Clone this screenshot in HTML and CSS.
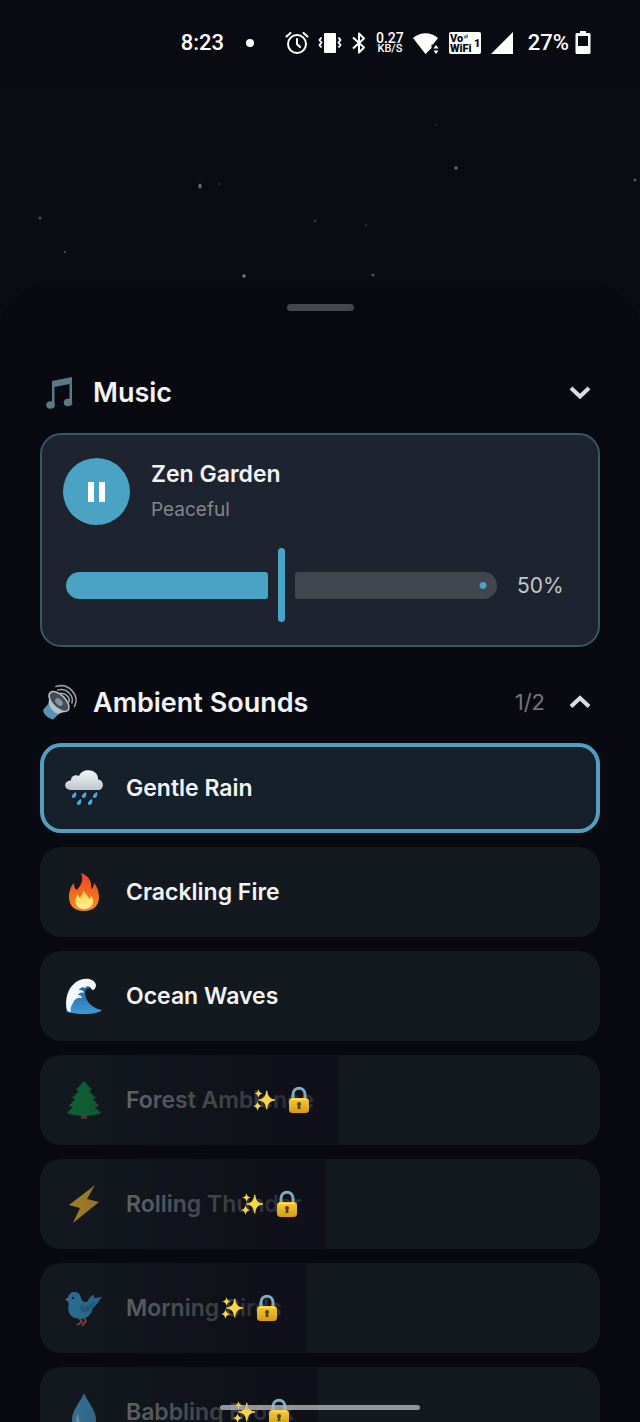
FILE: index.html
```html
<!DOCTYPE html>
<html lang="en">
<head>
<meta charset="utf-8">
<meta name="viewport" content="width=device-width, initial-scale=1">
<title>Sounds</title>
<link rel="stylesheet" href="styles.css">
</head>
<body>

<!-- shared icons -->
<svg class="defs" aria-hidden="true">
	<defs>
		<linearGradient id="cloud" x1="0" y1="0" x2="0" y2="1"><stop offset="0" stop-color="#f4f6f7"/><stop offset="1" stop-color="#bcc8ce"/></linearGradient>
		<linearGradient id="flame" x1="0" y1="0" x2="0" y2="1"><stop offset="0" stop-color="#e8432a"/><stop offset="1" stop-color="#fb8c1a"/></linearGradient>
		<linearGradient id="core" x1="0" y1="0" x2="0" y2="1"><stop offset="0" stop-color="#ffc928"/><stop offset="1" stop-color="#fff3a0"/></linearGradient>
		<linearGradient id="sea" x1="0" y1="0" x2="0" y2="1"><stop offset="0" stop-color="#1d5c88"/><stop offset="1" stop-color="#3d9ad6"/></linearGradient>
		<linearGradient id="gold" x1="0" y1="0" x2="0" y2="1"><stop offset="0" stop-color="#f5cd3a"/><stop offset="1" stop-color="#d89a12"/></linearGradient>
	</defs>
	<symbol id="i-sparkles" viewBox="0 0 24 24">
		<g fill="#f7d64a">
			<path d="M15 2c1 6.500 3 9 9 10-6 1-8 3.500-9 10-1-6.500-3-9-9-10 6-1 8-3.500 9-10z" stroke="#f7d64a" stroke-width="1"/>
			<path d="M6 0c.6 3.200 1.500 4.300 5 5-3.500.7-4.400 1.800-5 5-.6-3.200-1.500-4.300-5-5 3.500-.7 4.400-1.800 5-5z"/>
			<path d="M5 13c.7 3.600 2 5 5.500 5.500C7 19 5.700 20.400 5 24c-.7-3.600-2-5-5-5.500 3-.5 4.300-1.900 5-5.500z"/>
		</g>
	</symbol>
	<symbol id="i-lock" viewBox="0 0 24 28">
		<path d="M6 14V8.500c0-8.500 12-8.500 12 0V14" fill="none" stroke="#7eadc4" stroke-width="3"/>
		<rect x="2" y="12" width="20" height="15" rx="3.500" fill="url(#gold)"/>
		<path d="M4 13.500h16" stroke="#fbe27a" stroke-width="1"/>
		<circle cx="12" cy="18" r="2" fill="#55400f"/><path d="M11 18h2l.5 5h-3z" fill="#55400f"/>
	</symbol>
</svg>

<div class="screen">

	<header class="statusbar">
		<span class="clock">8:23</span>
		<span class="dot"></span>
		<svg width="24" height="24" viewBox="0 0 24 24" fill="none" stroke="#fff" stroke-width="2" stroke-linecap="round" stroke-linejoin="round"><circle cx="12" cy="13" r="9"/><path d="M12 8v5l3 3M1.500 5.500l4-3.500M22.500 5.500l-4-3.500"/></svg>
		<svg width="24" height="24" viewBox="0 0 24 24" fill="none" stroke="#fff" stroke-width="2" stroke-linejoin="round"><rect x="6" y="2" width="12" height="20" rx="1" fill="#fff" stroke="none"/><path d="M3.500 6.500L1.500 9l2 2.500-2 2.500 2 2.500M20.500 6.500l2 2.500-2 2.500 2 2.500-2 2.500"/></svg>
		<svg width="16" height="24" viewBox="0 0 16 24" fill="none" stroke="#fff" stroke-width="2" stroke-linejoin="round"><path d="M2 6.500l11 10-5 5V2.500l5 5-11 10"/></svg>
		<span class="speed"><b>0.27</b><small>KB/S</small></span>
		<svg width="27" height="24" viewBox="0 0 27 24" fill="#fff"><path d="M0 7C7 .5 18 .5 25 7l-5 6.500h-1.500V17L12.500 23z"/><path d="M23 14l2.500 3.500h-5zM23 23l2.500-3.500h-5z"/></svg>
		<svg width="32" height="22" viewBox="0 0 32 22"><rect width="32" height="22" rx="2" fill="#fff"/><g class="vowifi"><text x="1" y="10">Vo</text><text x="1" y="20">WiFi</text><text x="25" y="15">1</text></g><path d="M16 6.500v-3M18 6V2.500" stroke="#0a0a12" stroke-width="1"/></svg>
		<svg width="24" height="24" viewBox="0 0 24 24" fill="#fff"><path d="M23 1v22H1z"/></svg>
		<span class="battery">
			27%
			<svg width="16" height="24" viewBox="0 0 16 24"><path d="M5 0h6v2h3a1.500 1.500 0 0 1 1.500 1.500v18A1.500 1.500 0 0 1 14 23H2a1.500 1.500 0 0 1-1.500-1.500v-18A1.500 1.500 0 0 1 2 2h3z" fill="#fff"/><path d="M3 5h10v10H3z" fill="#0a0a12"/></svg>
		</span>
	</header>

	<svg class="stars" viewBox="0 0 640 200" preserveAspectRatio="none" fill="#fff">
		<circle cx="436" cy="40" r="1" opacity=".12"/>
		<circle cx="456" cy="83" r="1.700" opacity=".4"/>
		<circle cx="635" cy="95" r="1.500" opacity=".3"/>
		<ellipse cx="200" cy="101" rx="1.600" ry="2.600" opacity=".4"/>
		<circle cx="219" cy="99" r="1.200" opacity=".15"/>
		<circle cx="40" cy="133" r="1.600" opacity=".28"/>
		<circle cx="315" cy="136" r="1.500" opacity=".15"/>
		<circle cx="366" cy="140" r="1.200" opacity=".12"/>
		<circle cx="65" cy="167" r="1.200" opacity=".25"/>
		<circle cx="244" cy="191" r="1.700" opacity=".45"/>
		<circle cx="373" cy="190" r="1.600" opacity=".28"/>
	</svg>

	<main class="sheet">
		<div class="handle"></div>

		<button class="section-head" type="button">
			<svg class="emoji" viewBox="0 0 40 40"><path d="M12 9l20-4v4.500l-17.500 3.500V32H12z M29.500 7H32v22h-2.500z M12 9l20-4v6.500l-20 4z" fill="#5a7a86"/><ellipse cx="10.500" cy="33" rx="4.300" ry="3.800" fill="#5a7a86"/><ellipse cx="28" cy="30.500" rx="4.300" ry="3.800" fill="#5a7a86"/></svg>
			<span class="section-title">Music</span>
			<svg class="chevron" viewBox="0 0 24 24"><path d="M3 8l9 8.500L21 8"/></svg>
		</button>

		<section class="player">
			<div class="track">
				<button class="pause" type="button" aria-label="Pause"><svg width="20" height="20" viewBox="0 0 20 20" fill="#fff"><path d="M1 0h6v20H1zM12 0h6v20h-6z"/></svg></button>
				<div class="track-text">
					<div class="track-name">Zen Garden</div>
					<div class="track-mood">Peaceful</div>
				</div>
			</div>
			<div class="volume">
				<div class="slider">
					<span class="filled" style="flex-grow:50"></span>
					<span class="rest" style="flex-grow:50"></span>
					<input type="range" id="volume" min="0" max="100" value="50" aria-label="Music volume">
				</div>
				<label for="volume">50%</label>
			</div>
		</section>

		<button class="section-head" type="button">
			<svg class="emoji" viewBox="0 0 40 40">
				<g fill="none" stroke="#9a9da0" stroke-width="1.600" stroke-linecap="round"><path d="M16 4.500c13-4 24 9 18.500 20"/><path d="M18 8c9-2.500 16 6 14 13"/><path d="M20 11.500c6-1 10.500 4.500 9 8.500"/></g>
				<path d="M3 28l6-7 11 10-7 6.500c-5-1-9-4.500-10-9.500z" fill="#5c92ad"/>
				<path d="M8.500 21l1.500-11 18.500 18.500L18 32c-5-2-8-6-9.500-11z" fill="#a9c4cf"/>
				<ellipse cx="19" cy="19.500" rx="12.500" ry="6.500" transform="rotate(45 19 19.500)" fill="#414c54" stroke="#b2c4cc" stroke-width="1.500"/>
				<ellipse cx="19" cy="20" rx="4.500" ry="3" transform="rotate(45 19 20)" fill="#82939c"/>
			</svg>
			<span class="section-title">Ambient Sounds</span>
			<span class="count">1/2</span>
			<svg class="chevron" viewBox="0 0 24 24"><path d="M3 16.500L12 8l9 8.500"/></svg>
		</button>

		<div class="sounds">
			<button class="sound active" type="button">
				<span class="sound-body">
					<svg class="emoji" viewBox="0 0 40 40"><path d="M7 22c-8 0-7.500-9.500 0-9.500 0-5 5-6 8-4.500C18-1 35 .5 34 11.500c6.500.5 6.500 10.500 0 10.500z" fill="url(#cloud)"/><g fill="#4ba8e0"><path d="M12 24c1 3-.5 6-2.500 6s-3-3 2.500-6zM22 24c1 3-.5 6-2.500 6s-3-3 2.500-6zM33 24c1 3-.5 6-2.500 6s-3-3 2.500-6zM17 31c1 3-.5 6-2.500 6s-3-3 2.500-6zM28 31c1 3-.5 6-2.500 6s-3-3 2.500-6z"/></g></svg>
					<span>Gentle Rain</span>
				</span>
			</button>
			<button class="sound" type="button">
				<span class="sound-body">
					<svg class="emoji" viewBox="0 0 40 40"><path d="M17 1c9 3 11 10 10 16 2-1 3-3 3-6 3 3 5 9 5 14 0 9-6 14-15 14S5 34 5 25c0-6 2-11 5-14 0 4 1 6 3 7 4-5 7-10 4-17z" fill="url(#flame)"/><path d="M19 16c-1 4 5 6 6 11 1-1 2-2 2-4 5 7 1 14-7 14-9 0-11-9-6-15 0 2 1 3 2 4 2-3 4-6 3-10z" fill="url(#core)"/></svg>
					<span>Crackling Fire</span>
				</span>
			</button>
			<button class="sound" type="button">
				<span class="sound-body">
					<svg class="emoji" viewBox="0 0 40 40"><path d="M3 36C0 22 6 8 18 4c6-2 13 0 14 6l-3 4c-3-3-8-2-8 3 0 8 8 16 17 17-4 5-24 5-35 2z" fill="url(#sea)"/><path d="M3 34C0 20 6 8 16 4c8-3 15 0 16 5 0 3-2 5-4 5-1-4-5-5-7-2-3-2-5 0-6 2 3 0 5 1 5 3-3-1-5 0-6 2 2 0 4 1 4 3-4-1-8 1-9 5-2 3-3 6-2 9-2 0-3-1-4-2z" fill="#f2f8fb"/></svg>
					<span>Ocean Waves</span>
				</span>
			</button>
			<button class="sound locked" type="button">
				<span class="sound-body">
					<svg class="emoji" viewBox="0 0 40 40"><path d="M17 33h6v6h-6z" fill="#7a4a3a"/><path d="M20 1l8 9-3 1 7 7-3 1 6 7-4 1 6 6c-8 4-26 4-34 0l6-6-4-1 6-7-3-1 7-7-3-1z" fill="#0f8a43"/></svg>
					<span>Forest Ambience</span>
					<span class="premium"><svg class="sparkles"><use href="#i-sparkles"/></svg><svg class="lock"><use href="#i-lock"/></svg></span>
				</span>
			</button>
			<button class="sound locked" type="button">
				<span class="sound-body">
					<svg class="emoji" viewBox="0 0 40 40"><path d="M31 1L5 21l11 3L9 39l26-21-12-3z" fill="#f2b92b"/></svg>
					<span>Rolling Thunder</span>
					<span class="premium"><svg class="sparkles"><use href="#i-sparkles"/></svg><svg class="lock"><use href="#i-lock"/></svg></span>
				</span>
			</button>
			<button class="sound locked" type="button">
				<span class="sound-body">
					<svg class="emoji" viewBox="0 0 40 40"><path d="M15 30l3 4-5 3M20 30l2 3-4 5" fill="none" stroke="#d0604c" stroke-width="1.800"/><path d="M5 9l-4 2.500 4 2z" fill="#e08a4c"/><path d="M4 10C5 2 16 2 17 10c1 4 4 5 7 3 1-4 4-6 6-6v3l8-1-3 4c-2 3-4 5-6 7-2 7-6 11-12 11C8 31 2 25 5 16c-1-2-2-4-1-6z" fill="#3a9fd4"/><path d="M16 17c5 3 10 1 14-4-1 11-14 17-14 4z" fill="#2b86ba"/><circle cx="9" cy="10" r="1.200" fill="#17202b"/></svg>
					<span>Morning Birds</span>
					<span class="premium"><svg class="sparkles"><use href="#i-sparkles"/></svg><svg class="lock"><use href="#i-lock"/></svg></span>
				</span>
			</button>
			<button class="sound locked" type="button">
				<span class="sound-body">
					<svg class="emoji" viewBox="0 0 40 40"><path d="M20 1c3 8 12 17 12 26 0 16-24 16-24 0C8 18 17 9 20 1z" fill="#4aa3d4"/><path d="M14 22c-3 4-2 9 1 11 1-4 0-7-1-11z" fill="#9fd2ee"/></svg>
					<span>Babbling Brook</span>
					<span class="premium"><svg class="sparkles"><use href="#i-sparkles"/></svg><svg class="lock"><use href="#i-lock"/></svg></span>
				</span>
			</button>
		</div>
	</main>

	<div class="gesture-bar"></div>
</div>

</body>
</html>
```
FILE: styles.css
```css
* { box-sizing: border-box; }
body {
	margin: 0;
	background: #090911;
	color: #f2f3f5;
	font-family: Inter, "Liberation Sans", sans-serif;
}
button {
	border: 0;
	padding: 0;
	background: none;
	color: inherit;
	font: inherit;
	text-align: left;
	cursor: pointer;
}
svg { display: block; flex: none; }
.defs { position: absolute; width: 0; height: 0; }

.screen {
	position: relative;
	display: flex;
	flex-direction: column;
	height: 100vh;
	overflow: hidden;
	background: #0b0b14;
}

/* status bar */
.statusbar {
	display: flex;
	align-items: center;
	justify-content: flex-end;
	gap: 9px;
	height: 85px;
	padding: 0 49px 0 0;
	background: #0a0a12;
	color: #fff;
	font: 500 22px/24px Roboto, sans-serif;
}
.dot {
	width: 8px;
	height: 8px;
	margin: 0 22px 0 13px;
	border-radius: 50%;
	background: #fff;
}
.speed { text-align: center; }
.speed b, .speed small {
	display: block;
	font-size: 14px;
	font-weight: 500;
	line-height: 12px;
}
.speed small { font-size: 11px; line-height: 10px; }
.vowifi { font: 900 11px Roboto, sans-serif; fill: #0a0a12; }
.battery {
	display: flex;
	gap: 6px;
	margin-left: 5px;
}

.stars { width: 100%; height: 200px; }

/* bottom sheet */
.sheet {
	flex: 1;
	min-height: 0;
	overflow: hidden;
	padding: 19px 40px 0;
	border-radius: 48px 48px 0 0;
	background: #090911;
}
.handle {
	width: 67px;
	height: 7px;
	margin: 0 auto 53px;
	border-radius: 4px;
	background: #46454e;
}
.emoji { width: 40px; height: 40px; }
.section-head {
	display: flex;
	align-items: center;
	width: 100%;
	height: 56px;
	margin-bottom: 13px;
	padding-right: 8px;
}
.section-title {
	flex: 1;
	margin-left: 13px;
	font-size: 27px;
	font-weight: 600;
}
.count {
	margin-right: 23px;
	color: #74747c;
	font-size: 22px;
}
.chevron {
	width: 24px;
	height: 24px;
	fill: none;
	stroke: #dcdce0;
	stroke-width: 4;
}

/* player */
.player {
	margin-bottom: 27px;
	padding: 23px 21px;
	border: 2px solid #355766;
	border-radius: 21px;
	background: #1e242f;
}
.track {
	display: flex;
	align-items: center;
	gap: 21px;
}
.pause {
	display: flex;
	align-items: center;
	justify-content: center;
	width: 67px;
	height: 67px;
	border-radius: 50%;
	background: #4ba3c3;
}
.track-text {
	display: flex;
	flex-direction: column;
	gap: 6px;
	line-height: 30px;
}
.track-name {
	font-size: 23px;
	font-weight: 600;
}
.track-mood {
	color: #82858e;
	font-size: 19px;
}
.volume {
	display: flex;
	align-items: center;
	gap: 20px;
	margin-top: 23px;
	padding-left: 3px;
}
.volume label {
	width: 60px;
	color: #c3c6cd;
	font-size: 21px;
}
.slider {
	position: relative;
	display: flex;
	flex: 1;
	align-items: center;
	gap: 27px;
	height: 74px;
}
.filled, .rest { flex-basis: 0; height: 27px; }
.filled {
	border-radius: 14px 3px 3px 14px;
	background: #4ba3c3;
}
.rest {
	border-radius: 3px 14px 14px 3px;
	background: radial-gradient(circle at calc(100% - 14px) 50%, #4ba3c3 3px, #41464f 4px);
}
.slider input {
	position: absolute;
	inset: 0;
	width: 100%;
	height: 100%;
	margin: 0;
	background: none;
	appearance: none;
}
.slider input::-webkit-slider-thumb {
	width: 7px;
	height: 74px;
	border-radius: 4px;
	background: #4ba3c3;
	appearance: none;
}

/* ambient sounds */
.sounds {
	display: flex;
	flex-direction: column;
	gap: 14px;
}
.sound {
	display: flex;
	flex: none;
	height: 90px;
	overflow: hidden;
	border-radius: 21px;
	background: #141920;
	font-size: 23px;
	font-weight: 600;
}
.sound.active {
	background: #15202b;
	box-shadow: inset 0 0 0 4px #509fbf;
}
.sound-body {
	position: relative;
	display: flex;
	align-items: center;
	gap: 22px;
	height: 100%;
	padding: 0 24px;
}
.locked .sound-body { color: #7c8086; }
.locked .emoji { opacity: .7; }

/* fade with the premium badges, over the name */
.premium {
	position: absolute;
	inset: 0;
	display: flex;
	align-items: center;
	justify-content: flex-end;
	gap: 12px;
	padding-right: 27px;
	background: linear-gradient(to right, rgba(13, 13, 22, 0), rgba(13, 13, 22, .7) 80%);
}
.sparkles { width: 22px; height: 22px; }
.lock { width: 24px; height: 28px; }

.gesture-bar {
	position: absolute;
	bottom: 12px;
	left: 50%;
	width: 200px;
	height: 5px;
	margin-left: -100px;
	border-radius: 3px;
	background: rgba(180, 180, 184, .8);
}
```
